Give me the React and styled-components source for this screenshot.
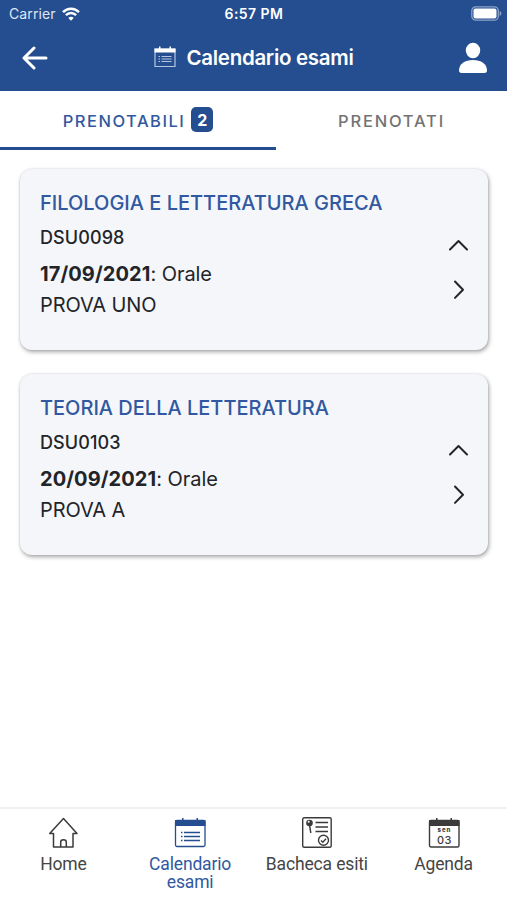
import React from 'react';
import styled, { createGlobalStyle } from 'styled-components';

const GlobalStyle = createGlobalStyle`
  * {
    box-sizing: border-box;
  }

  body {
    margin: 0;
    background: #fff;
    font-family: Inter, "Liberation Sans", sans-serif;
    color: #222428;
  }

  svg {
    display: block;
  }
`;

const Screen = styled.div`
  display: flex;
  flex-direction: column;
  height: 100vh;
  min-height: 900px;
  overflow: hidden;
`;

const Header = styled.header`
  height: 91px;
  background: #244e90;
  color: #fff;
`;

const StatusBar = styled.div`
  display: grid;
  grid-template-columns: 1fr auto 1fr;
  align-items: center;
  height: 27px;
  padding: 0 5px 0 9px;
`;

const Carrier = styled.div`
  display: flex;
  align-items: center;
  gap: 6px;
  font-size: 14px;
  letter-spacing: 0.1px;
  color: #dfe7f3;
`;

const Clock = styled.div`
  padding-right: 3px;
  font-size: 14px;
  font-weight: 600;
  letter-spacing: 0.45px;
`;

const Battery = styled.svg`
  justify-self: end;
`;

const TitleBar = styled.div`
  display: grid;
  grid-template-columns: 60px 1fr 60px;
  align-items: center;
  height: 62px;
  padding: 0 8px 0 9px;
`;

const IconButton = styled.button`
  display: flex;
  justify-content: center;
  width: 52px;
  padding: 0;
  border: 0;
  background: none;
  color: inherit;
  justify-self: ${({ $end }) => ($end ? 'end' : 'start')};
`;

const Title = styled.h1`
  display: flex;
  align-items: center;
  justify-content: center;
  gap: 11px;
  margin: 0;
  padding-right: 1px;
  font-size: 20.5px;
  font-weight: 600;
  letter-spacing: -0.3px;
  line-height: 24px;

  svg {
    margin-top: -3px;
  }
`;

const Tabs = styled.nav`
  display: grid;
  grid-template-columns: 276px 1fr;
  height: 59px;
`;

const Tab = styled.button`
  display: flex;
  align-items: center;
  justify-content: center;
  gap: 6px;
  padding: ${({ $active }) => ($active ? '3px 0 0' : '0')};
  border: 0;
  border-bottom: ${({ $active }) => ($active ? '3px solid #244e90' : '0')};
  background: #fff;
  font-family: inherit;
  font-size: 16.5px;
  font-weight: 500;
  letter-spacing: ${({ $active }) => ($active ? '1.5px' : '1.8px')};
  color: ${({ $active }) => ($active ? '#3158a0' : '#737373')};
`;

const Badge = styled.span`
  display: flex;
  align-items: center;
  justify-content: center;
  width: 22px;
  height: 25px;
  margin-top: -2px;
  border-radius: 5px;
  background: #244e90;
  color: #fff;
  font-size: 16px;
  font-weight: 700;
  letter-spacing: 0;
`;

const Exams = styled.main`
  display: flex;
  flex: 1;
  flex-direction: column;
  gap: 24px;
  padding: 19px 19px 0 20px;
`;

const Card = styled.article`
  display: flex;
  justify-content: space-between;
  height: 181px;
  padding: 18px 19px 0 20px;
  border-radius: 12px;
  background: #f4f6fa;
  box-shadow: 1px 2px 4px rgba(0, 0, 0, 0.35), 0 0 2px rgba(0, 0, 0, 0.12);
`;

const CardTitle = styled.h2`
  margin: 0;
  font-size: 20px;
  font-weight: 500;
  line-height: 32px;
  letter-spacing: 0;
  color: #3158a0;
`;

const Code = styled.div`
  font-size: 18px;
  font-weight: 500;
  line-height: 37px;
  letter-spacing: 0.1px;
`;

const Line = styled.div`
  font-size: 20px;
  line-height: 31px;
  letter-spacing: -0.1px;
`;

const DateLine = styled(Line)`
  margin-top: 3px;
  letter-spacing: -0.05px;

  b {
    font-weight: 700;
    letter-spacing: 0.08px;
  }
`;

const Arrows = styled.div`
  display: flex;
  flex-direction: column;
  gap: 22px;
  padding-top: 47px;
`;

const BottomNav = styled.nav`
  display: grid;
  grid-template-columns: repeat(4, 1fr);
  height: 93px;
  border-top: 2px solid #f1f1f1;
`;

const NavItem = styled.div`
  display: flex;
  flex-direction: column;
  align-items: center;
  gap: 6px;
  padding-top: 8px;
  font-family: Roboto, sans-serif;
  font-size: 17.5px;
  line-height: 18px;
  letter-spacing: -0.15px;
  text-align: center;
  color: ${({ $active }) => ($active ? '#3158a0' : '#454545')};
`;

const NavLabel = styled.span`
  display: block;
  height: 18px;
`;

const WifiIcon = () => (
  <svg width="18" height="14" viewBox="0 0 18 14" fill="none" stroke="#fff" strokeWidth="2.5">
    <path d="M1 5.1C5.5.5 12.5.5 17 5.1" />
    <path d="M3.9 8.2C6.8 5.2 11.2 5.2 14.1 8.2" />
    <path d="M9 13.8 6.3 10.9C7.8 9.3 10.2 9.3 11.7 10.9Z" fill="#fff" stroke="none" />
  </svg>
);

const BackIcon = () => (
  <svg width="26" height="24" viewBox="0 0 26 24" fill="none" stroke="#fff" strokeWidth="3" strokeLinecap="round" strokeLinejoin="round">
    <path d="M12 2 2 12l10 10M2.5 12h21.5" />
  </svg>
);

const UserIcon = () => (
  <svg width="30" height="32" viewBox="0 0 30 32" fill="#fff">
    <ellipse cx="15" cy="8.5" rx="7.2" ry="7.8" />
    <path d="M1 28.5C1 22 7 18 15 18s14 4 14 10.5c0 1.6-.8 2.500-2.400 2.500H3.400C1.800 31 1 30.100 1 28.500Z" />
  </svg>
);

const TitleCalendar = () => (
  <svg width="22" height="22" viewBox="0 0 22 22" fill="none" stroke="#b5c6e1">
    <path d="M1 3h20v17.5H1z" strokeWidth="1.2" />
    <path d="M.5 2.5h21v4H.5zM5 .5h1.500v3H5zM15.500 .5H17v3h-1.500z" fill="#fff" stroke="none" />
    <path d="M4.500 10.500h1.500M4.500 13h1.500M4.500 15.500h1.500M7.500 10.500h10M7.500 13h10M7.500 15.500h10" strokeWidth="1.2" />
  </svg>
);

const HomeIcon = () => (
  <svg width="30" height="32" viewBox="0 0 30 32" fill="none" stroke="#3b3b3b" strokeWidth="1.5" strokeLinejoin="round">
    <path d="M15.500 1.500 1.700 16.500H5.500V30H25V16.500H29Z" />
    <path d="M12.700 30V25c0-1.400 1-2.300 2.800-2.300s2.800.9 2.800 2.300v5" />
  </svg>
);

const CalendarIcon = () => (
  <svg width="32" height="32" viewBox="0 0 32 32" fill="none" stroke="#244e90">
    <rect x="1.5" y="3.5" width="29.5" height="26" rx="1.5" strokeWidth="1.3" />
    <path d="M1 3h30.500v6H1zM8 1h1.500v3H8zM22.500 1H24v3h-1.500z" fill="#244e90" stroke="none" />
    <path d="M7 15.500h1.500M7 19.500h1.500M7 23.500h1.500M10 15.500h16M10 19.500h16M10 23.500h16" strokeWidth="1.5" />
  </svg>
);

const ResultsIcon = () => (
  <svg width="32" height="32" viewBox="0 0 32 32" fill="none" stroke="#3b3b3b" strokeWidth="1.4">
    <rect x="1.7" y="0.8" width="28.5" height="29.5" rx="1.5" />
    <path d="M14.500 5.500h12.500M14.500 10h12.500M14.500 14.500h12.500" />
    <circle cx="8.5" cy="6" r="3.3" fill="#3b3b3b" stroke="none" />
    <circle cx="7.7" cy="4.7" r="1" fill="#fff" stroke="none" />
    <path d="M8.600 8.500 9.800 16" strokeWidth="1.5" />
    <circle cx="22.5" cy="23.3" r="5" />
    <path d="m20 23.500 1.800 1.800L25 21.800" />
  </svg>
);

const AgendaIcon = () => (
  <svg width="32" height="32" viewBox="0 0 32 32" fill="none" stroke="#3b3b3b">
    <rect x="1.5" y="3.5" width="29.5" height="26.5" rx="1.5" strokeWidth="1.4" />
    <path d="M1 3h30.500v6H1zM8 1h1.500v3H8zM22.500 1H24v3h-1.500z" fill="#3b3b3b" stroke="none" />
    <g fill="#3b3b3b" stroke="none" fontFamily="Inter, sans-serif" textAnchor="middle">
      <text x="16.5" y="14.5" fontSize="6" fontWeight="800" letterSpacing="1">sen</text>
      <text x="16.5" y="26.5" fontSize="11" fontWeight="500" letterSpacing=".5">03</text>
    </g>
  </svg>
);

const ArrowIcon = ({ d }) => (
  <svg width="22" height="22" viewBox="0 0 22 22" fill="none" stroke="#222428" strokeWidth="2" strokeLinecap="round" strokeLinejoin="round">
    <path d={d} />
  </svg>
);

const exams = [
  { title: 'FILOLOGIA E LETTERATURA GRECA', code: 'DSU0098', date: '17/09/2021', name: 'PROVA UNO' },
  { title: 'TEORIA DELLA LETTERATURA', code: 'DSU0103', date: '20/09/2021', name: 'PROVA A' },
];

const ExamCard = ({ exam }) => (
  <Card>
    <div>
      <CardTitle>{exam.title}</CardTitle>
      <Code>{exam.code}</Code>
      <DateLine><b>{exam.date}</b>: Orale</DateLine>
      <Line>{exam.name}</Line>
    </div>
    <Arrows>
      <ArrowIcon d="M3 15.5 11.5 7 20 15.5" />
      <ArrowIcon d="M8 3.5l8 8.200-8 8.200" />
    </Arrows>
  </Card>
);

export default function App() {
  return (
    <>
      <GlobalStyle />
      <Screen>
        <Header>
          <StatusBar>
            <Carrier>Carrier <WifiIcon /></Carrier>
            <Clock>6:57 PM</Clock>
            <Battery width="31" height="15" viewBox="0 0 31 15">
              <rect x=".8" y=".8" width="26.5" height="13.4" rx="4" fill="none" stroke="#8ea4c9" strokeWidth="1.3" />
              <rect x="2.5" y="2.5" width="23" height="10" rx="2" fill="#fff" />
              <path d="M28.700 5v5c2.200-.8 2.200-4.200 0-5Z" fill="#8ea4c9" />
            </Battery>
          </StatusBar>
          <TitleBar>
            <IconButton aria-label="Indietro"><BackIcon /></IconButton>
            <Title><TitleCalendar />Calendario esami</Title>
            <IconButton $end aria-label="Profilo"><UserIcon /></IconButton>
          </TitleBar>
        </Header>
        <Tabs>
          <Tab $active>PRENOTABILI<Badge>2</Badge></Tab>
          <Tab>PRENOTATI</Tab>
        </Tabs>
        <Exams>
          {exams.map((exam) => <ExamCard key={exam.code} exam={exam} />)}
        </Exams>
        <BottomNav>
          <NavItem><HomeIcon /><NavLabel>Home</NavLabel></NavItem>
          <NavItem $active>
            <CalendarIcon />
            <div>
              <NavLabel>Calendario</NavLabel>
              <NavLabel>esami</NavLabel>
            </div>
          </NavItem>
          <NavItem><ResultsIcon /><NavLabel>Bacheca esiti</NavLabel></NavItem>
          <NavItem><AgendaIcon /><NavLabel>Agenda</NavLabel></NavItem>
        </BottomNav>
      </Screen>
    </>
  );
}
